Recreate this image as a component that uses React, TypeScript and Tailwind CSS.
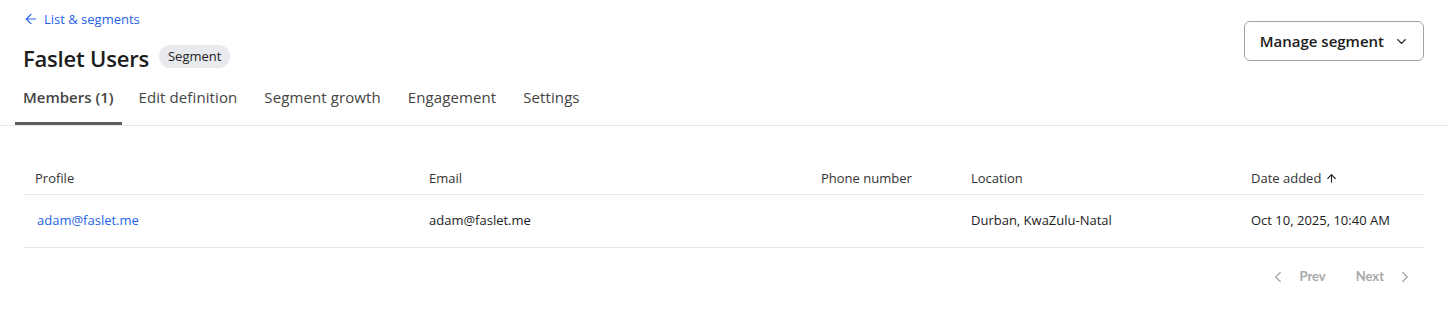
import { ArrowLeft, ArrowUp, ChevronDown, ChevronLeft, ChevronRight } from "lucide-react"

const tabs = ["Members (1)", "Edit definition", "Segment growth", "Engagement", "Settings"]

const columns = [
  { label: "Profile" },
  { label: "Email" },
  { label: "Phone number" },
  { label: "Location" },
  { label: "Date added", sorted: true },
]

const members = [
  {
    profile: "adam@faslet.me",
    email: "adam@faslet.me",
    phone: "",
    location: "Durban, KwaZulu-Natal",
    added: "Oct 10, 2025, 10:40 AM",
  },
]

export default function App() {
  return (
    <div className="min-h-[317px] bg-white text-[#1c1c1c] font-['Open_Sans',sans-serif]">
      <div className="flex justify-between items-start px-6 pt-[9px]">
        <div>
          <a href="#" className="flex items-center gap-[5px] -ml-[1px] text-[13px] text-[#2563eb] leading-5">
            <ArrowLeft size={16} strokeWidth={1.75} />
            List &amp; segments
          </a>
          <div className="flex items-center gap-[10px] mt-[15px] -ml-[1px]">
            <h1 className="text-[22px] font-semibold leading-7 tracking-[-0.2px]">Faslet Users</h1>
            <span className="mb-[4px] rounded-full bg-[#e8eaed] px-[9px] py-[2px] text-[13px] leading-[19px] text-[#222]">
              Segment
            </span>
          </div>
        </div>
        <button className="mt-[12px] flex items-center gap-[10px] h-[40px] pl-[15px] pr-[14px] border border-[#a3a3a3] rounded-md text-[15px] font-semibold text-[#1c1c1c]">
          Manage segment
          <ChevronDown size={15} strokeWidth={2} />
        </button>
      </div>

      <div className="mt-[14px] border-b border-[#e7e7e7] px-[15px] flex gap-[11px]">
        {tabs.map((tab, i) => (
          <div
            key={tab}
            className={
              i === 0
                ? "px-2 h-[39px] text-[15px] font-semibold text-[#444] border-b-[3px] border-[#5c5c5c] -mb-[1px] mr-[-2px]"
                : "px-2 h-[39px] text-[15px] text-[#444] tracking-[0.1px]"
            }
          >
            <span className="block leading-5 pt-[1px]">{tab}</span>
          </div>
        ))}
      </div>

      <div className="px-[23px] pt-[37px]">
        <div className="grid grid-cols-[394px_392px_150px_280px_1fr] border-b border-[#e9e9e9] text-[13px] text-[#333] h-[32px] items-center">
          {columns.map((c) => (
            <div key={c.label} className="px-3 flex items-center gap-[4px]">
              {c.label}
              {c.sorted && <ArrowUp size={13} strokeWidth={2} className="text-[#222]" />}
            </div>
          ))}
        </div>
        {members.map((m) => (
          <div
            key={m.email}
            className="grid grid-cols-[394px_392px_150px_280px_1fr] border-b border-[#e9e9e9] text-[13px] h-[53px] items-center"
          >
            <div className="px-3 pl-[14px] text-[#2563eb]">{m.profile}</div>
            <div className="px-3 text-[#1c1c1c]">{m.email}</div>
            <div className="px-3">{m.phone}</div>
            <div className="px-3 text-[#1c1c1c]">{m.location}</div>
            <div className="px-3 text-[#1c1c1c]">{m.added}</div>
          </div>
        ))}
        <div className="flex justify-end items-center gap-[30px] pt-[19px] pr-[11px] text-[13px] font-bold text-[#a8a8a8] font-['Lato',sans-serif]">
          <span className="flex items-center gap-3">
            <ChevronLeft size={18} strokeWidth={1.75} />
            Prev
          </span>
          <span className="flex items-center gap-3">
            Next
            <ChevronRight size={18} strokeWidth={1.75} />
          </span>
        </div>
      </div>
    </div>
  )
}
